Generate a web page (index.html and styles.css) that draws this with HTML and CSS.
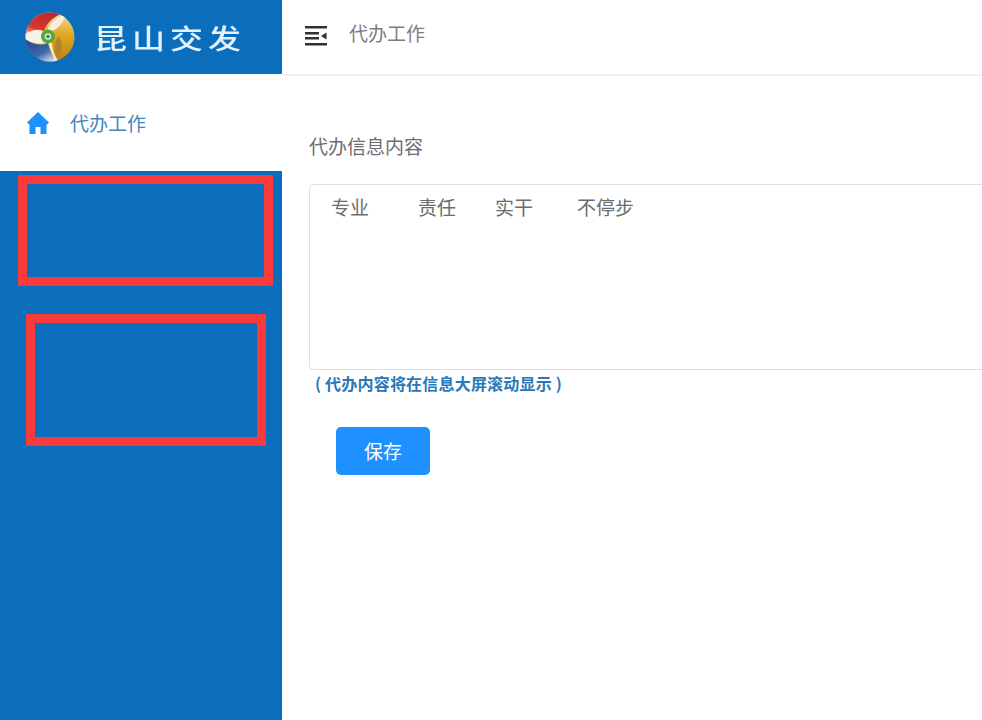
FILE: index.html
```html
<!DOCTYPE html>
<html lang="zh-CN">
  <head>
    <meta charset="UTF-8" />
    <meta name="viewport" content="width=device-width, initial-scale=1.0" />
    <title>代办工作</title>
    <link rel="stylesheet" href="styles.css">
  </head>
  <body>
    <aside class="sidebar">
      <div class="brand">
        <svg class="brand-logo" viewBox="0 0 50 50" aria-hidden="true">
          <defs>
            <clipPath id="logoClip">
              <circle cx="25" cy="25" r="24.500" />
            </clipPath>
            <linearGradient id="logoRed" x1="0" y1="1" x2="0.700" y2="0">
              <stop offset="0" stop-color="#f0d8cc" />
              <stop offset="0.350" stop-color="#d8352c" />
              <stop offset="1" stop-color="#b92a2e" />
            </linearGradient>
            <linearGradient id="logoGold" x1="0" y1="0" x2="0" y2="1">
              <stop offset="0" stop-color="#f3dfae" />
              <stop offset="0.450" stop-color="#dfa822" />
              <stop offset="1" stop-color="#bb8116" />
            </linearGradient>
            <linearGradient id="logoBlue" x1="0.100" y1="0" x2="0.900" y2="1">
              <stop offset="0" stop-color="#23478f" />
              <stop offset="0.600" stop-color="#3d68ad" />
              <stop offset="1" stop-color="#e4e9f2" />
            </linearGradient>
          </defs>
          <g clip-path="url(#logoClip)">
            <rect width="50" height="50" fill="url(#logoGold)" />
            <path d="M0 0H36V2C28 5 21 12 19 19 12 16 6 18 0 24z" fill="url(#logoRed)" />
            <path d="M0 22C8 17 14 17 20 20L24 31C14 33 6 31 0 27z" fill="#f6f1ea" />
            <path d="M0 27C8 33 16 34 23 31 24 38 27 45 31 50H0z" fill="url(#logoBlue)" />
            <path d="M40 3C31 5 24 11 22 20 31 20 38 12 40 3z" fill="#f8ecdc" />
            <path d="M33 24C38 30 38 38 33 46 29 40 29 32 33 24z" fill="#b5832a" />
            <path d="M23 30C25 36 27 42 30 50H34C29 43 27 36 27 30z" fill="#f1eee4" />
          </g>
          <circle cx="23" cy="24.500" r="7" fill="#58a83a" />
          <circle cx="23" cy="24.500" r="3.200" fill="#dcebc6" />
          <circle cx="23" cy="24.500" r="1.800" fill="#3f8f35" />
        </svg>
        <span class="brand-name">昆山交发</span>
      </div>
      <a class="nav-item" href="#">
        <svg class="nav-icon" viewBox="0 0 22 22" aria-hidden="true">
          <path d="M11 0 22 10.500 20 12.500H19.500V22H13.500V15H8.500V22H2.500V12.500H2L0 10.500z" />
        </svg>
        <span>代办工作</span>
      </a>
      <div class="mark mark-one"></div>
      <div class="mark mark-two"></div>
    </aside>

    <main class="content">
      <header class="topbar">
        <svg class="menu-icon" viewBox="0 0 22 20" aria-hidden="true">
          <path d="M0 1.300H22M0 7.300H14M0 12.300H14M0 18.300H22" />
          <polygon points="16,10 21.500,6.500 21.500,13.500" />
        </svg>
        <span class="topbar-title">代办工作</span>
      </header>

      <form class="notice-form">
        <label class="field-label">代办信息内容</label>
        <div class="notice-box">
          <span>专业</span><span class="gap-a">责任</span><span class="gap-b">实干</span><span class="gap-c">不停步</span>
        </div>
        <p class="hint">( 代办内容将在信息大屏滚动显示 )</p>
        <button class="save-btn" type="button">保存</button>
      </form>
    </main>
  </body>
</html>
```

FILE: styles.css
```css
* {
  box-sizing: border-box;
}

body {
  margin: 0;
  height: 720px;
  display: flex;
  overflow: hidden;
  background: #fff;
  color: #6a6c70;
  font-family: "Noto Sans CJK SC", "Liberation Sans", sans-serif;
  font-size: 19px;
}

.sidebar {
  position: relative;
  flex: 0 0 282px;
  background: #0a6ebd;
}

.brand {
  height: 74px;
  padding-left: 25px;
  display: flex;
  align-items: center;
}

.brand-logo {
  width: 50px;
  height: 50px;
  filter: blur(0.4px);
}

.brand-name {
  margin-left: 19px;
  color: #e4f1fb;
  font-size: 33px;
  font-weight: 500;
  letter-spacing: 5px;
  line-height: 1;
  white-space: nowrap;
  transform: scaleY(0.82);
}

.nav-item {
  height: 97px;
  padding: 0 0 0 27px;
  display: flex;
  align-items: center;
  background: #fff;
  color: #3f86c2;
  text-decoration: none;
}

.nav-icon {
  width: 22px;
  height: 22px;
  margin-right: 21px;
  fill: #1e90ff;
}

/* hand drawn marks on top of the menu */
.mark {
  position: absolute;
  border: 9px solid #f83a3a;
}

.mark-one {
  left: 18px;
  top: 175px;
  width: 255px;
  height: 111px;
}

.mark-two {
  left: 26px;
  top: 314px;
  width: 240px;
  height: 132px;
}

.content {
  flex: 1;
  min-width: 0;
}

.topbar {
  height: 76px;
  padding-left: 23px;
  display: flex;
  align-items: center;
  border-bottom: 2px solid #eff1fa;
}

.menu-icon {
  width: 22px;
  height: 20px;
  margin: 0 22px 2px 0;
  stroke: #303133;
  stroke-width: 2.5;
  fill: #303133;
}

.menu-icon polygon {
  stroke: none;
}

.topbar-title {
  margin-top: -10px;
  color: #7b7d81;
}

.notice-form {
  padding: 56px 0 0 27px;
}

.field-label {
  display: block;
  line-height: 28px;
}

/* runs off the right side of the window in the original */
.notice-box {
  height: 186px;
  margin-top: 24px;
  padding: 9px 21px;
  border: 1px solid #dcdfe6;
  border-right: none;
  border-radius: 5px 0 0 5px;
  line-height: 25px;
  white-space: nowrap;
}

.gap-a {
  margin-left: 49px;
}

.gap-b {
  margin-left: 39px;
}

.gap-c {
  margin-left: 44px;
}

.hint {
  margin: 2px 0 0 6px;
  color: #2a78b8;
  font-size: 16px;
  font-weight: 700;
  letter-spacing: 0.2px;
  line-height: 22px;
}

.save-btn {
  display: block;
  width: 94px;
  height: 48px;
  margin: 33px 0 0 27px;
  padding: 0 0 2px;
  border: none;
  border-radius: 5px;
  background: #1e90ff;
  color: #fff;
  font-family: inherit;
  font-size: 19px;
  cursor: pointer;
}
```
